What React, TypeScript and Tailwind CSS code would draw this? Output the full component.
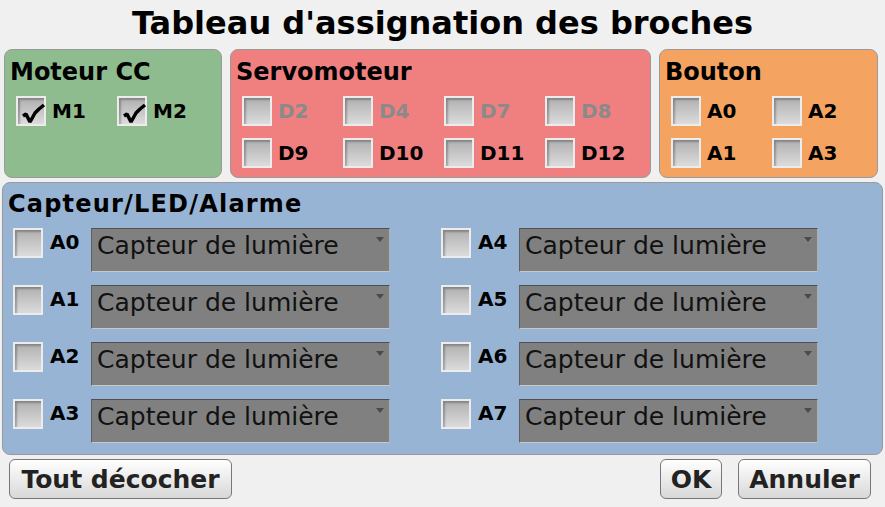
import React from "react";

const Check = () => (
  <svg viewBox="0 0 30 30" className="absolute -left-[2px] -top-[2px] w-[30px] h-[30px]">
    <path d="M7 20 L10 18 L14 26 L19 17 L23 13 L28 9" fill="none" stroke="#000" strokeWidth="3.5" strokeLinejoin="bevel" />
  </svg>
);

const Box = ({ checked }: { checked?: boolean }) => (
  <div className="relative shrink-0 w-[30px] h-[30px] border-2 border-[#ececec] bg-linear-to-b from-[#b0b0b0] to-[#dcdcdc] shadow-[inset_2px_2px_2px_rgba(0,0,0,0.25)]">
    {checked && <Check />}
  </div>
);

const Pin = ({ label, checked, disabled }: { label: string; checked?: boolean; disabled?: boolean }) => (
  <div className="flex items-center gap-[6px] w-[101px]">
    <Box checked={checked} />
    <span className={`text-[20px] font-bold ${disabled ? "text-[#8a8a8a]" : "text-black"}`}>{label}</span>
  </div>
);

const Panel = ({ title, className, children }: { title: string; className: string; children: React.ReactNode }) => (
  <div className={`h-[129px] rounded-[8px] border border-[#9a9a9a] px-[5px] pt-[8px] ${className}`}>
    <div className="text-[24px] font-bold leading-[28px] text-black">{title}</div>
    <div className="mt-[10px] pl-[6px] grid gap-y-[12px]">{children}</div>
  </div>
);

const Sensor = ({ pin }: { pin: string }) => (
  <div className="flex items-start">
    <Box />
    <span className="ml-[7px] mt-[4px] w-[41px] text-[20px] font-bold leading-[20px] text-black">{pin}</span>
    <div className="relative w-[299px] h-[44px] bg-[#808080] border border-t-[#505050] border-l-[#606060] border-b-[#c8c8c8] border-r-[#b0b0b0] pl-[5px] text-[25px] leading-[34px] text-[#111]">
      Capteur de lumière
      <div className="absolute right-[5px] top-[8px] w-0 h-0 border-l-[4px] border-r-[4px] border-t-[5px] border-l-transparent border-r-transparent border-t-[#4a4a4a]" />
    </div>
  </div>
);

const Btn = ({ label, w }: { label: string; w: string }) => (
  <button className={`${w} h-[40px] rounded-[6px] border border-[#777] bg-linear-to-b from-white to-[#d8d8d8] shadow-[inset_0_1px_0_#fff] text-[25px] font-bold text-[#222] leading-none`}>
    {label}
  </button>
);

export default function App() {
  return (
    <div className="w-[885px] h-[507px] bg-[#f0f0f0] font-['DejaVu_Sans',sans-serif] overflow-hidden">
      <h1 className="h-[46px] text-center text-[32px] font-bold leading-[46px] text-black">
        Tableau d'assignation des broches
      </h1>
      <div className="mt-[3px] flex gap-2 pl-1">
        <Panel title="Moteur CC" className="w-[218px] bg-[#8fbc8f]">
          <div className="flex">
            <Pin label="M1" checked />
            <Pin label="M2" checked />
          </div>
        </Panel>
        <Panel title="Servomoteur" className="w-[421px] bg-[#f08080]">
          <div className="flex">
            <Pin label="D2" disabled />
            <Pin label="D4" disabled />
            <Pin label="D7" disabled />
            <Pin label="D8" disabled />
          </div>
          <div className="flex">
            <Pin label="D9" />
            <Pin label="D10" />
            <Pin label="D11" />
            <Pin label="D12" />
          </div>
        </Panel>
        <Panel title="Bouton" className="w-[219px] bg-[#f4a460]">
          <div className="flex">
            <Pin label="A0" />
            <Pin label="A2" />
          </div>
          <div className="flex">
            <Pin label="A1" />
            <Pin label="A3" />
          </div>
        </Panel>
      </div>
      <div className="mx-[2px] mt-[4px] h-[273px] rounded-[8px] border border-[#9a9a9a] bg-[#98b4d4] px-[5px] pt-[7px]">
        <div className="text-[24px] font-bold leading-[28px] tracking-[1.2px] text-black">Capteur/LED/Alarme</div>
        <div className="mt-[10px] pl-[5px] grid grid-cols-[428px_428px] gap-y-[13px]">
          {["A0", "A4", "A1", "A5", "A2", "A6", "A3", "A7"].map((p) => (
            <Sensor key={p} pin={p} />
          ))}
        </div>
      </div>
      <div className="mt-[4px] flex justify-between pl-[9px] pr-[14px]">
        <Btn label="Tout décocher" w="w-[223px]" />
        <div className="flex gap-4">
          <Btn label="OK" w="w-[62px]" />
          <Btn label="Annuler" w="w-[133px]" />
        </div>
      </div>
    </div>
  );
}
